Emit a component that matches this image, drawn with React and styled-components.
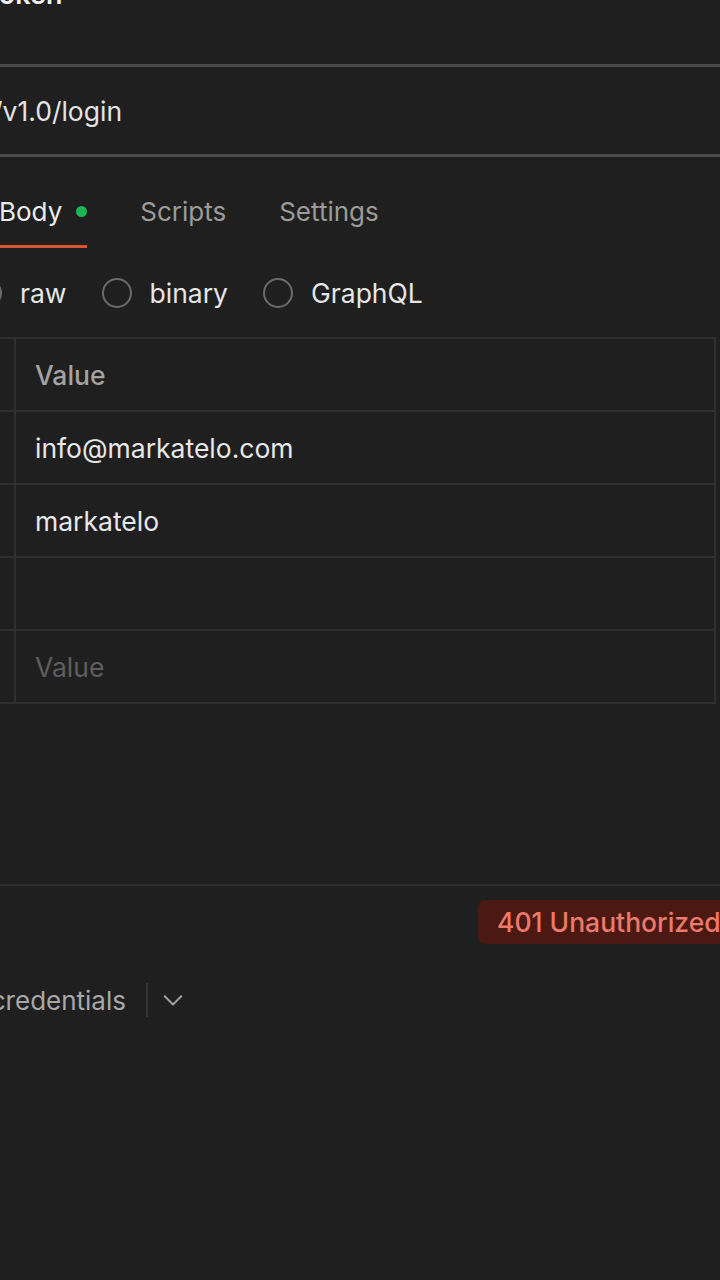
import React from "react";
import styled, { createGlobalStyle } from "styled-components";

const Global = createGlobalStyle`
  html, body { margin: 0; padding: 0; background: #1f1f1f; }
  #root { width: 720px; height: 1280px; overflow: hidden; }
  * { box-sizing: border-box; }
`;

const Page = styled.div`
  width: 720px;
  height: 1280px;
  overflow: hidden;
  background: #1f1f1f;
  font-family: Inter, "Noto Sans", sans-serif;
  font-size: 26px;
  color: #e6e6e6;
  display: flex;
  flex-direction: column;
`;

const Title = styled.h1`
  margin: -22px 0 0 -17px;
  height: 86px;
  font-size: 27px;
  font-weight: 600;
  line-height: 34px;
  color: #f2f2f2;
`;

const UrlBar = styled.div`
  height: 93px;
  border-top: 3px solid #4a4a4a;
  border-bottom: 3px solid #4a4a4a;
  display: flex;
  align-items: center;
`;

const UrlText = styled.span`
  margin-left: -7px;
  margin-top: 1px;
  color: #e4e4e4;
  font-size: 26.5px;
`;

const Tabs = styled.div`
  display: flex;
  align-items: stretch;
  height: 91px;
  gap: 53px;
  margin-left: -1px;
`;

const Tab = styled.div`
  position: relative;
  display: flex;
  align-items: center;
  gap: 14px;
  padding-top: 18px;
  color: ${(p) => (p.$active ? "#ececec" : "#9b9b9b")};
  font-size: 26px;
  ${(p) =>
    p.$active &&
    `
    &::after {
      content: "";
      position: absolute;
      left: -20px;
      right: 0;
      bottom: 0;
      height: 3px;
      background: #d9532f;
    }
  `}
`;

const Dot = styled.span`
  width: 11px;
  height: 11px;
  border-radius: 50%;
  background: #1cb655;
`;

const Radios = styled.div`
  display: flex;
  align-items: center;
  height: 89px;
  gap: 35px;
  margin-left: -28px;
`;

const RadioItem = styled.label`
  display: flex;
  align-items: center;
  gap: 18px;
  color: #e6e6e6;
  font-size: 26.5px;
`;

const RadioCircle = styled.span`
  width: 30px;
  height: 30px;
  border-radius: 50%;
  border: 2px solid #6b6b6b;
`;

const Table = styled.div`
  display: grid;
  grid-template-columns: 216px 1fr;
  margin-left: -200px;
  width: 916px;
  border-top: 2px solid #2f2f2f;
  border-right: 2px solid #2f2f2f;
`;

const Cell = styled.div`
  height: 73px;
  display: flex;
  align-items: center;
  padding-left: 19px;
  border-bottom: 2px solid #2f2f2f;
  border-right: ${(p) => (p.$key ? "2px solid #2f2f2f" : "none")};
  color: ${(p) =>
    p.$variant === "head" ? "#a3a3a3" : p.$variant === "placeholder" ? "#5e5e5e" : "#e8e8e8"};
  font-size: 26.5px;
  font-weight: ${(p) => (p.$variant === "head" ? 500 : 400)};
`;

const Spacer = styled.div`
  height: 180px;
`;

const Response = styled.div`
  border-top: 2px solid #2c2c2c;
  display: flex;
  flex-direction: column;
`;

const StatusRow = styled.div`
  display: flex;
  padding-top: 14px;
  padding-left: 478px;
`;

const Badge = styled.span`
  flex-shrink: 0;
  display: inline-flex;
  align-items: center;
  height: 44px;
  padding: 0 19px;
  border-radius: 8px;
  background: #4b1911;
  color: #ec7a6c;
  font-size: 26.5px;
  font-weight: 500;
  white-space: nowrap;
`;

const AuthRow = styled.div`
  display: flex;
  align-items: center;
  margin-top: 39px;
  margin-left: -200px;
  height: 34px;
`;

const AuthText = styled.span`
  width: 326px;
  flex-shrink: 0;
  text-align: right;
  color: #a8a8a8;
  font-size: 26px;
  white-space: nowrap;
`;

const Divider = styled.span`
  width: 2px;
  height: 34px;
  background: #333333;
  margin: 0 14px 0 20px;
`;

const Chevron = () => (
  <svg width="22" height="22" viewBox="0 0 24 24" fill="none" stroke="#a0a0a0" strokeWidth="2.2" strokeLinecap="round" strokeLinejoin="round">
    <path d="M3 8l9 9 9-9" />
  </svg>
);

export default function App() {
  return (
    <>
      <Global />
      <Page>
        <Title>Token</Title>
        <UrlBar>
          <UrlText>/v1.0/login</UrlText>
        </UrlBar>
        <Tabs>
          <Tab $active>
            Body
            <Dot />
          </Tab>
          <Tab>Scripts</Tab>
          <Tab>Settings</Tab>
        </Tabs>
        <Radios>
          <RadioItem>
            <RadioCircle />
            raw
          </RadioItem>
          <RadioItem>
            <RadioCircle />
            binary
          </RadioItem>
          <RadioItem>
            <RadioCircle />
            GraphQL
          </RadioItem>
        </Radios>
        <Table>
          <Cell $key $variant="head">Key</Cell>
          <Cell $variant="head">Value</Cell>
          <Cell $key>email</Cell>
          <Cell>info@markatelo.com</Cell>
          <Cell $key>password</Cell>
          <Cell>markatelo</Cell>
          <Cell $key></Cell>
          <Cell></Cell>
          <Cell $key $variant="placeholder">Key</Cell>
          <Cell $variant="placeholder">Value</Cell>
        </Table>
        <Spacer />
        <Response>
          <StatusRow>
            <Badge>401 Unauthorized</Badge>
          </StatusRow>
          <AuthRow>
            <AuthText>Save credentials</AuthText>
            <Divider />
            <Chevron />
          </AuthRow>
        </Response>
      </Page>
    </>
  );
}
